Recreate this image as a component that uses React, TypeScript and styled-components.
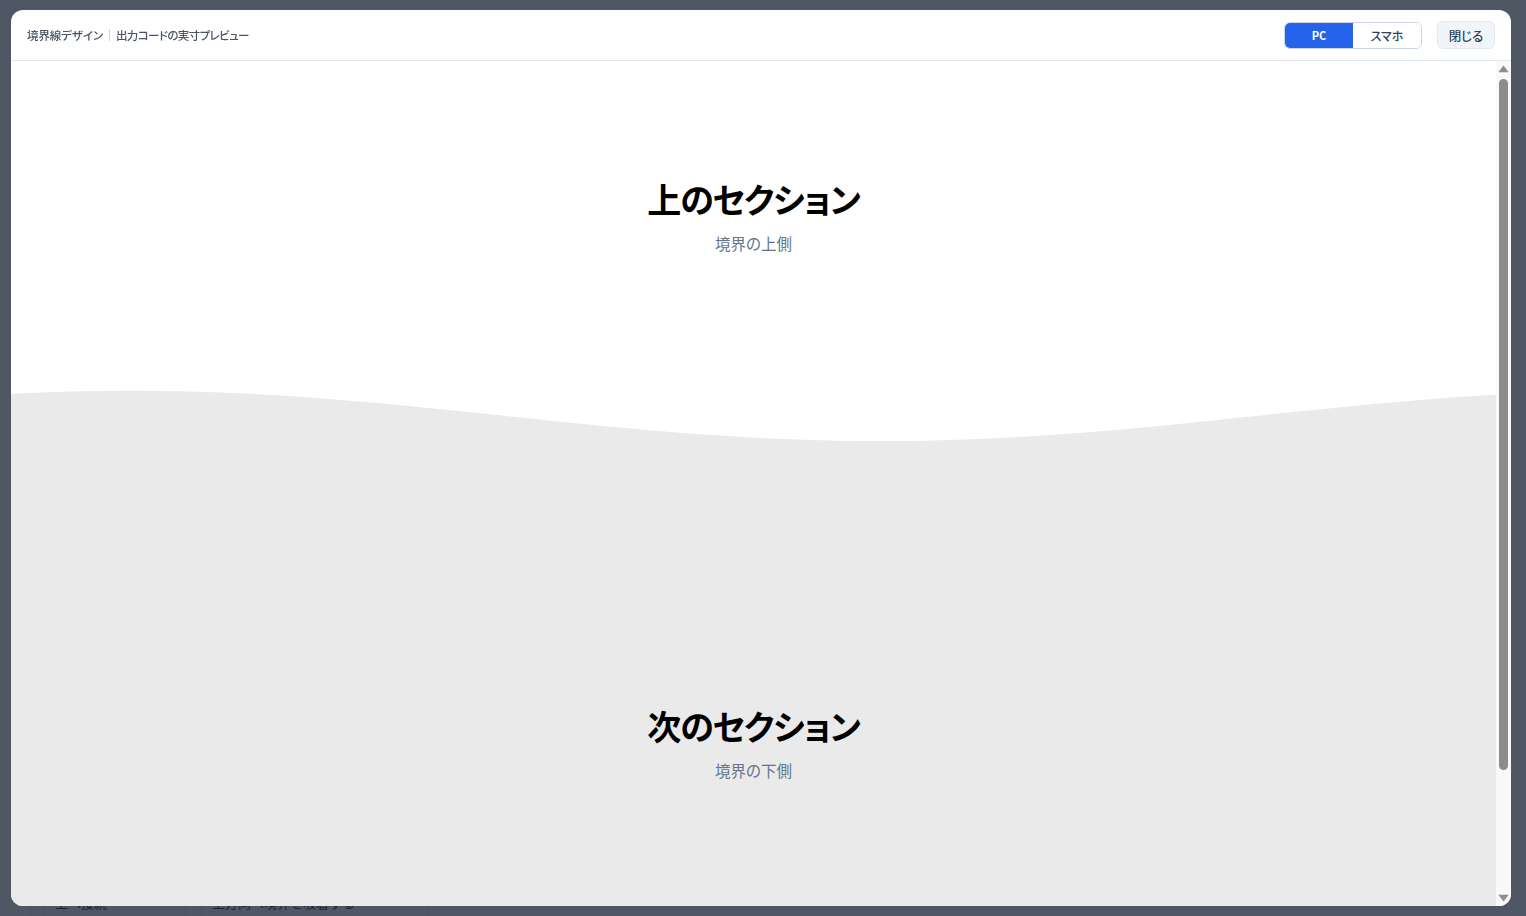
import React from "react";
import styled, { createGlobalStyle } from "styled-components";

const GlobalStyle = createGlobalStyle`
  html, body { margin: 0; padding: 0; height: 100%; }
  body {
    overflow: hidden;
    background: #f8fafc;
    font-family: "Noto Sans CJK JP", "Noto Sans", sans-serif;
    color: #1e293b;
  }
  * { box-sizing: border-box; }
`;

/* ---------- underlying editor page (dimmed by the overlay) ---------- */
const Page = styled.div`
  height: 100vh;
  padding: 0 30px;
  display: flex;
  flex-direction: column;
  justify-content: flex-end;
`;

const Panel = styled.div`
  border-left: 1px solid #e2e8f0;
  padding-left: 13px;
  height: 24px;
  display: flex;
  align-items: flex-start;
`;

const Field = styled.div<{ $w: number }>`
  width: ${(p) => p.$w}px;
  height: 30px;
  border-left: 1px solid #e2e8f0;
  border-right: 1px solid #e2e8f0;
  padding: 0 10px;
  font-size: 13px;
  line-height: 22px;
  color: #334155;
  margin-right: 15px;
  flex-shrink: 0;
`;

/* ---------- modal ---------- */
const Overlay = styled.div`
  position: fixed;
  inset: 0;
  background: rgba(15, 23, 42, 0.72);
  padding: 10px 15px 10px 11px;
  display: flex;
`;

const Modal = styled.div`
  flex: 1;
  min-width: 0;
  background: #ffffff;
  border-radius: 12px;
  overflow: hidden;
  display: flex;
  flex-direction: column;
`;

const Header = styled.header`
  height: 51px;
  flex-shrink: 0;
  border-bottom: 1px solid #e2e8f0;
  padding: 0 16px;
  display: flex;
  align-items: center;
  justify-content: space-between;
`;

const Title = styled.div`
  display: flex;
  align-items: center;
  font-size: 11.5px;
  font-weight: 500;
  color: #4b5563;
  font-feature-settings: "palt";
  letter-spacing: -0.6px;
`;

const TitleLead = styled.span`
  letter-spacing: -0.1px;
`;

const Divider = styled.span`
  width: 1px;
  height: 12px;
  background: #d1d5db;
  margin: 0 6px;
`;

const Controls = styled.div`
  display: flex;
  align-items: center;
  gap: 15px;
`;

const Toggle = styled.div`
  display: flex;
  height: 27px;
  border: 1px solid #cbd5e1;
  border-radius: 6px;
  overflow: hidden;
`;

const ToggleButton = styled.button<{ $active?: boolean }>`
  width: 68px;
  border: none;
  margin: 0;
  padding: 0;
  font-family: inherit;
  font-size: ${(p) => (p.$active ? "11px" : "12px")};
  font-weight: ${(p) => (p.$active ? 700 : 500)};
  background: ${(p) => (p.$active ? "#2563eb" : "#ffffff")};
  color: ${(p) => (p.$active ? "#ffffff" : "#334155")};
  font-feature-settings: "palt";
  cursor: pointer;
`;

const CloseButton = styled.button`
  height: 28px;
  width: 58px;
  border: 1px solid #e2e8f0;
  border-radius: 6px;
  background: #f1f5f9;
  color: #334155;
  font-family: inherit;
  font-size: 12.5px;
  font-weight: 500;
  font-feature-settings: "palt";
  padding: 0;
  cursor: pointer;
`;

const BodyRow = styled.div`
  flex: 1;
  min-height: 0;
  display: flex;
`;

const ScrollBody = styled.div`
  flex: 1;
  min-width: 0;
  overflow: hidden;
`;

/* drawn scrollbar */
const Scrollbar = styled.div`
  width: 15px;
  flex-shrink: 0;
  background: #f9f9f9;
  display: flex;
  flex-direction: column;
`;

const ArrowBtn = styled.div`
  height: 15px;
  flex-shrink: 0;
  display: flex;
  svg { display: block; }
`;

const Track = styled.div`
  flex: 1;
  padding: 3px 3px 0;
`;

const Thumb = styled.div`
  height: 691px;
  background: #8c8c8c;
  border-radius: 5px;
`;

const Section = styled.section<{ $bg: string; $height: number; $top: number }>`
  background: ${(p) => p.$bg};
  height: ${(p) => p.$height}px;
  padding-top: ${(p) => p.$top}px;
  display: flex;
  flex-direction: column;
  align-items: center;
`;

const Heading = styled.h2`
  margin: 0;
  font-size: 34px;
  line-height: 43px;
  font-weight: 700;
  color: #000000;
  letter-spacing: -1.2px;
  font-feature-settings: "palt";
`;

const Sub = styled.p`
  margin: 11px 0 0;
  font-size: 15.5px;
  line-height: 24px;
  color: #64748b;
  font-feature-settings: "palt";
`;

const WaveSvg = styled.svg`
  display: block;
  width: 100%;
  height: 52px;
  background: #ffffff;
`;

const W = 1485;
const H = 52;

function waveY(x: number): number {
  return 25.9 - 25.2 * Math.cos((Math.PI * (x - 119)) / 751);
}

function wavePath(): string {
  const pts: string[] = [];
  for (let x = 0; x < W; x += 15) pts.push(`${x},${waveY(x).toFixed(2)}`);
  pts.push(`${W},${waveY(W).toFixed(2)}`);
  return `M${pts.join(" L")} L${W},${H} L0,${H} Z`;
}

const Wave: React.FC = () => (
  <WaveSvg viewBox={`0 0 ${W} ${H}`} preserveAspectRatio="none">
    <path d={wavePath()} fill="#eaeaea" />
  </WaveSvg>
);

export default function App() {
  return (
    <>
      <GlobalStyle />
      <Page>
        <Panel>
          <Field $w={142}>上へ接続</Field>
          <Field $w={228}>上方向へ境界を吸着する</Field>
        </Panel>
      </Page>
      <Overlay>
        <Modal>
          <Header>
            <Title>
              <TitleLead>境界線デザイン</TitleLead>
              <Divider />
              <span>出力コードの実寸プレビュー</span>
            </Title>
            <Controls>
              <Toggle>
                <ToggleButton $active>PC</ToggleButton>
                <ToggleButton>スマホ</ToggleButton>
              </Toggle>
              <CloseButton>閉じる</CloseButton>
            </Controls>
          </Header>
          <BodyRow>
            <ScrollBody>
              <Section $bg="#ffffff" $height={329} $top={116}>
                <Heading>上のセクション</Heading>
                <Sub>境界の上側</Sub>
              </Section>
              <Wave />
              <Section $bg="#eaeaea" $height={612} $top={262}>
                <Heading>次のセクション</Heading>
                <Sub>境界の下側</Sub>
              </Section>
            </ScrollBody>
            <Scrollbar>
              <ArrowBtn>
                <svg width="15" height="15" viewBox="0 0 15 15">
                  <path d="M7.5 4.8 L12.2 11 L2.8 11 Z" fill="#8f8f8f" strokeLinejoin="round" stroke="#8f8f8f" strokeWidth="0.6" />
                </svg>
              </ArrowBtn>
              <Track>
                <Thumb />
              </Track>
              <ArrowBtn>
                <svg width="15" height="15" viewBox="0 0 15 15">
                  <path d="M2.8 4 L12.2 4 L7.5 10.2 Z" fill="#8f8f8f" strokeLinejoin="round" stroke="#8f8f8f" strokeWidth="0.6" />
                </svg>
              </ArrowBtn>
            </Scrollbar>
          </BodyRow>
        </Modal>
      </Overlay>
    </>
  );
}
